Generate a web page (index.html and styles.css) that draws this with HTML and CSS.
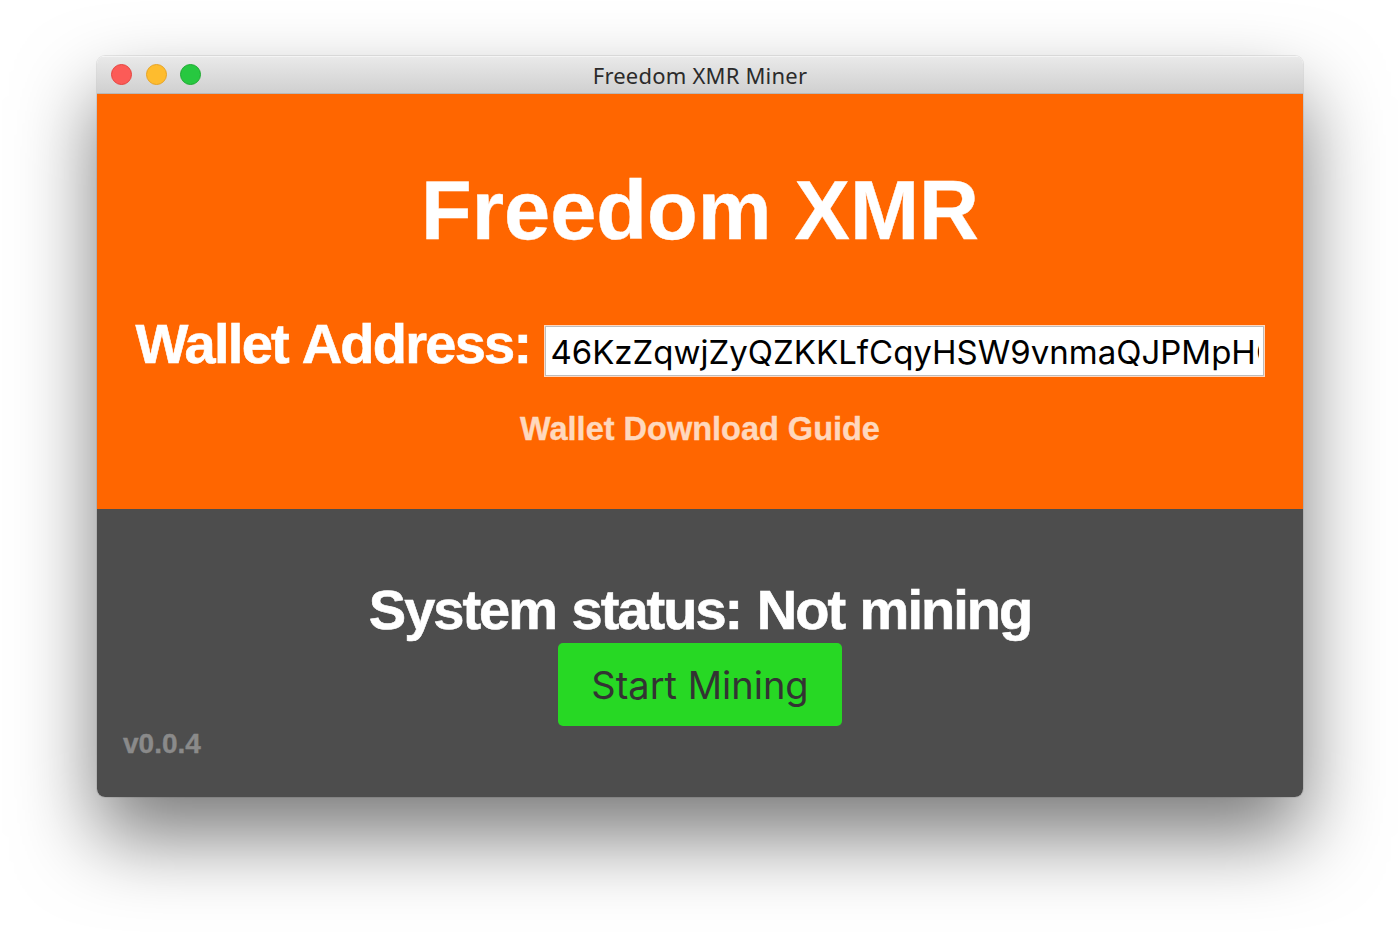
FILE: index.html
```html
<!doctype html>
<html lang="en">
<head>
    <meta charset="UTF-8">
    <title>Freedom XMR Miner</title>
    <link rel="stylesheet" href="styles.css">
</head>
<body>
    <div class="window">
<!--     titlebar    -->
        <div class="titlebar">
            <div class="lights">
                <span class="light red"></span>
                <span class="light yellow"></span>
                <span class="light green"></span>
            </div>
            <div class="title">Freedom XMR Miner</div>
        </div>
<!--     wallet    -->
        <div class="top">
            <h1 class="brand">Freedom XMR</h1>
            <div class="wallet">
                <label class="wallet-label" for="wallet">Wallet Address:</label>
                <input class="wallet-input" id="wallet" type="text" value="46KzZqwjZyQZKKLfCqyHSW9vnmaQJPMpHGbLxTkWcRs8vNdYt">
            </div>
            <a class="guide" href="#">Wallet Download Guide</a>
        </div>
<!--     status    -->
        <div class="bottom">
            <h2 class="status">System status: Not mining</h2>
            <button class="start" type="button">Start Mining</button>
            <div class="version">v0.0.4</div>
        </div>
    </div>
</body>
</html>
```

FILE: styles.css
```css
* {
    margin: 0;
    padding: 0;
    box-sizing: border-box;
}
html, body {
    height: 100%;
}
body {
    padding-top: 56px;
    background: #fff;
    font-family: "Liberation Sans", Arial, sans-serif;
    overflow: hidden;
}

/*window start*/
.window {
    display: flex;
    flex-direction: column;
    width: 1206px;
    height: 741px;
    margin: 0 auto;
    border-radius: 8px;
    overflow: hidden;
    box-shadow: 0 0 0 1px rgba(0, 0, 0, .08), 0 40px 80px rgba(0, 0, 0, .52);
}
/*window end*/

/*titlebar start*/
.titlebar {
    position: relative;
    display: flex;
    align-items: center;
    justify-content: center;
    height: 38px;
    flex: none;
    background: linear-gradient(#e9e9e9, #d0d0d0);
    border-top: 1px solid #f4f4f4;
    border-bottom: 1px solid #b8b8b8;
}
.lights {
    position: absolute;
    top: 7px;
    left: 14px;
    display: flex;
    gap: 13.5px;
}
.light {
    width: 21px;
    height: 21px;
    border-radius: 50%;
}
.red {
    background: #fc5b57;
    border: 1px solid #e5443f;
}
.yellow {
    background: #febc2e;
    border: 1px solid #e6a324;
}
.green {
    background: #27c840;
    border: 1px solid #1eaa30;
}
.title {
    margin-top: -1px;
    font-family: "Noto Sans", sans-serif;
    font-size: 22px;
    letter-spacing: .2px;
    color: #2b2b2b;
}
/*titlebar end*/

/*top start*/
.top {
    display: flex;
    flex-direction: column;
    align-items: center;
    height: 415px;
    flex: none;
    padding-top: 72px;
    background: #f60;
    color: #fff;
}
.brand {
    font-size: 83px;
    line-height: 90px;
    -webkit-text-stroke: .4px #fff;
}
.wallet {
    display: flex;
    align-items: flex-start;
    gap: 15px;
    margin-top: 63px;
}
.wallet-label {
    font-size: 56px;
    font-weight: bold;
    line-height: 50px;
    letter-spacing: -1.75px;
    word-spacing: 2px;
    -webkit-text-stroke: .6px #fff;
}
.wallet-input {
    width: 719px;
    height: 50px;
    margin-top: 7px;
    padding: 2px 4px 0;
    border: 1px solid #bdbdbd;
    box-shadow: 0 0 0 1px rgba(255, 255, 255, .75);
    background: #fff;
    color: #000;
    font-family: "Inter", sans-serif;
    font-size: 33px;
}
.guide {
    margin-top: 35px;
    font-size: 32.5px;
    font-weight: bold;
    color: #ffd8bd;
    text-decoration: none;
    -webkit-text-stroke: .4px #ffd8bd;
}
/*top end*/

/*bottom start*/
.bottom {
    position: relative;
    display: flex;
    flex-direction: column;
    align-items: center;
    flex: 1;
    padding-top: 68px;
    background: #4d4d4d;
}
.status {
    font-size: 56px;
    line-height: 66px;
    letter-spacing: -2px;
    word-spacing: 2px;
    color: #fff;
    -webkit-text-stroke: .6px #fff;
}
.start {
    width: 284px;
    height: 83px;
    border: 0;
    border-radius: 5px;
    background: #27d824;
    color: #333;
    font-family: "Inter", sans-serif;
    font-size: 38px;
}
.version {
    position: absolute;
    left: 26px;
    top: 219px;
    font-size: 28px;
    font-weight: bold;
    color: #8a8a8a;
    -webkit-text-stroke: .4px #8a8a8a;
}
/*bottom end*/
```
